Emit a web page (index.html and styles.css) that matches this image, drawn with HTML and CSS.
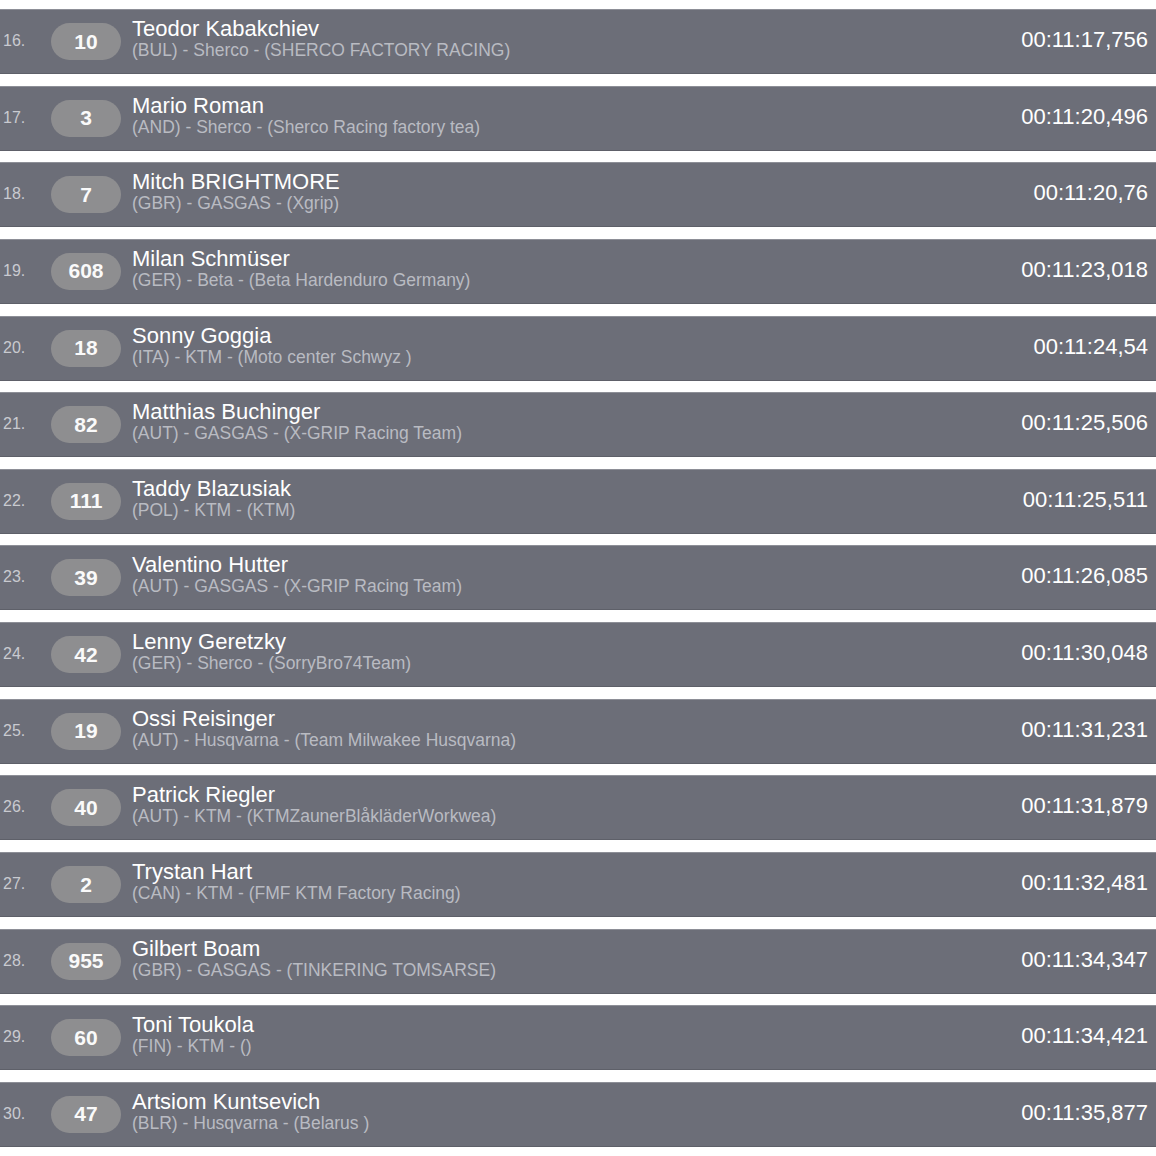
FILE: index.html
```html
<!DOCTYPE html>
<html lang="en">
<head>
  <meta charset="UTF-8" />
  <meta name="viewport" content="width=device-width, initial-scale=1.0"/>
  <title>Results</title>
  <link rel="stylesheet" href="styles.css">
</head>
<body>
  <div class="results">
    <div class="row"><span class="pos">16.</span><span class="num">10</span><div class="rider"><div class="name">Teodor Kabakchiev</div><div class="info">(BUL) - Sherco - (SHERCO FACTORY RACING)</div></div><span class="time">00:11:17,756</span></div>
    <div class="row"><span class="pos">17.</span><span class="num">3</span><div class="rider"><div class="name">Mario Roman</div><div class="info">(AND) - Sherco - (Sherco Racing factory tea)</div></div><span class="time">00:11:20,496</span></div>
    <div class="row"><span class="pos">18.</span><span class="num">7</span><div class="rider"><div class="name">Mitch BRIGHTMORE</div><div class="info">(GBR) - GASGAS - (Xgrip)</div></div><span class="time">00:11:20,76</span></div>
    <div class="row"><span class="pos">19.</span><span class="num">608</span><div class="rider"><div class="name">Milan Schmüser</div><div class="info">(GER) - Beta - (Beta Hardenduro Germany)</div></div><span class="time">00:11:23,018</span></div>
    <div class="row"><span class="pos">20.</span><span class="num">18</span><div class="rider"><div class="name">Sonny Goggia</div><div class="info">(ITA) - KTM - (Moto center Schwyz )</div></div><span class="time">00:11:24,54</span></div>
    <div class="row"><span class="pos">21.</span><span class="num">82</span><div class="rider"><div class="name">Matthias Buchinger</div><div class="info">(AUT) - GASGAS - (X-GRIP Racing Team)</div></div><span class="time">00:11:25,506</span></div>
    <div class="row"><span class="pos">22.</span><span class="num">111</span><div class="rider"><div class="name">Taddy Blazusiak</div><div class="info">(POL) - KTM - (KTM)</div></div><span class="time">00:11:25,511</span></div>
    <div class="row"><span class="pos">23.</span><span class="num">39</span><div class="rider"><div class="name">Valentino Hutter</div><div class="info">(AUT) - GASGAS - (X-GRIP Racing Team)</div></div><span class="time">00:11:26,085</span></div>
    <div class="row"><span class="pos">24.</span><span class="num">42</span><div class="rider"><div class="name">Lenny Geretzky</div><div class="info">(GER) - Sherco - (SorryBro74Team)</div></div><span class="time">00:11:30,048</span></div>
    <div class="row"><span class="pos">25.</span><span class="num">19</span><div class="rider"><div class="name">Ossi Reisinger</div><div class="info">(AUT) - Husqvarna - (Team Milwakee Husqvarna)</div></div><span class="time">00:11:31,231</span></div>
    <div class="row"><span class="pos">26.</span><span class="num">40</span><div class="rider"><div class="name">Patrick Riegler</div><div class="info">(AUT) - KTM - (KTMZaunerBlåkläderWorkwea)</div></div><span class="time">00:11:31,879</span></div>
    <div class="row"><span class="pos">27.</span><span class="num">2</span><div class="rider"><div class="name">Trystan Hart</div><div class="info">(CAN) - KTM - (FMF KTM Factory Racing)</div></div><span class="time">00:11:32,481</span></div>
    <div class="row"><span class="pos">28.</span><span class="num">955</span><div class="rider"><div class="name">Gilbert Boam</div><div class="info">(GBR) - GASGAS - (TINKERING TOMSARSE)</div></div><span class="time">00:11:34,347</span></div>
    <div class="row"><span class="pos">29.</span><span class="num">60</span><div class="rider"><div class="name">Toni Toukola</div><div class="info">(FIN) - KTM - ()</div></div><span class="time">00:11:34,421</span></div>
    <div class="row"><span class="pos">30.</span><span class="num">47</span><div class="rider"><div class="name">Artsiom Kuntsevich</div><div class="info">(BLR) - Husqvarna - (Belarus )</div></div><span class="time">00:11:35,877</span></div>
  </div>
</body>
</html>
```

FILE: styles.css
```css
body { margin: 0; background: #f4f4f6; font-family: "Liberation Sans", Arial, sans-serif; }

.results { background: #fff; padding-top: 9px; padding-bottom: 10px; }

.row {
  display: flex;
  align-items: center;
  height: 65px;
  box-sizing: border-box;
  margin-bottom: 11.65px;
  background: #6c6e78;
  border-top: 1px solid #8d8f97;
  border-bottom: 1px solid #5e6069;
  color: #fff;
}
.row:last-child { margin-bottom: 0; }

.pos { width: 51px; padding-left: 3px; box-sizing: border-box; font-size: 16px; color: #c9cad0; margin-top: -1px; }

.num {
  width: 70px;
  height: 37px;
  border-radius: 19px;
  background: #8e8e90;
  display: flex;
  align-items: center;
  justify-content: center;
  font-size: 21px;
  font-weight: bold;
  color: #fafafa;
}

.rider { flex: 1; margin-left: 11px; margin-top: -6px; }
.name { font-size: 22px; line-height: 23px; color: #fff; }
.info { font-size: 17.5px; line-height: 20px; color: #b9bbc2; }

.time { font-size: 22px; padding-right: 8px; margin-top: -3px; color: #fff; }
```
